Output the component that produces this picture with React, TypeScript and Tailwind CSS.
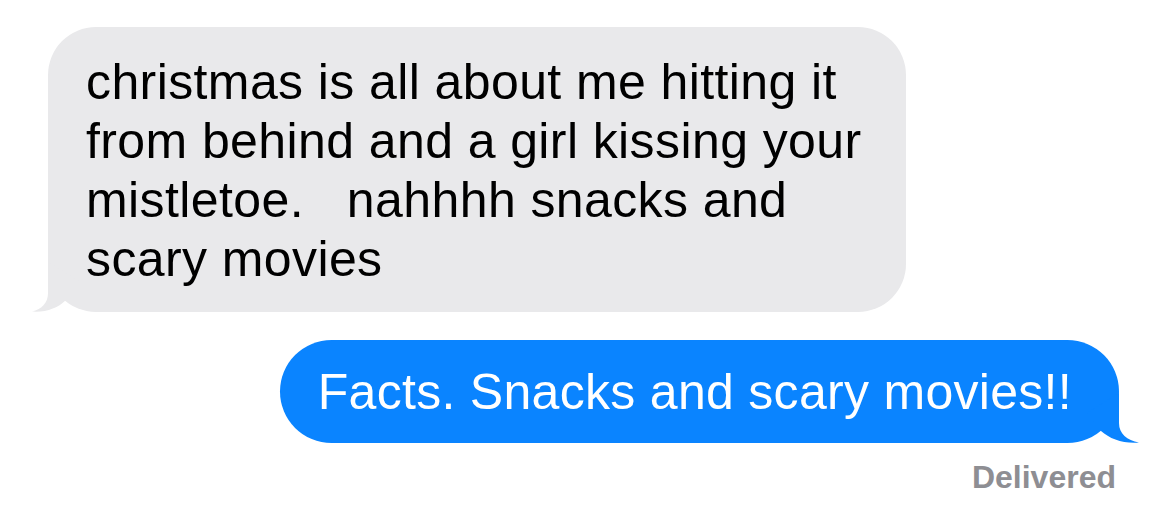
const font = { fontFamily: '"Liberation Sans", Arial, sans-serif' };

function LeftTail() {
  return (
    <svg
      className="absolute bottom-0 left-[-18px]"
      width="60"
      height="50"
      viewBox="0 0 60 50"
    >
      <path
        d="M18 0 L18 31 C18 41 12 47 2 49.6 C16 50.6 28 46 36 38 L50 20 Z"
        fill="#e9e9eb"
      />
    </svg>
  );
}

function RightTail() {
  return (
    <svg
      className="absolute bottom-0 right-[-22px]"
      width="64"
      height="50"
      viewBox="0 0 64 50"
    >
      <path
        d="M42 0 L42 30 C42 41 50 47 62 49.6 C46 50.8 33 46 24 38 L10 20 Z"
        fill="#0a84ff"
      />
    </svg>
  );
}

export default function App() {
  return (
    <div className="flex h-[528px] w-[1170px] flex-col bg-white" style={font}>
      <div className="relative ml-[48px] mt-[27px] w-[858px] rounded-[48px] bg-[#e9e9eb] pb-[23px] pl-[38px] pr-[24px] pt-[26px]">
        <LeftTail />
        <p className="relative text-[50px] leading-[59px] tracking-[0.4px] text-black">
          christmas is all about me hitting it from behind and a girl kissing
          your mistletoe.&nbsp;&nbsp; nahhhh snacks and scary movies
        </p>
      </div>

      <div className="relative mr-[51px] mt-[28px] self-end rounded-full bg-[#0a84ff] pb-[21px] pl-[38px] pr-[47px] pt-[23px]">
        <RightTail />
        <p className="relative whitespace-nowrap text-[50px] leading-[59px] tracking-[0.3px] text-white">
          Facts. Snacks and scary movies!!
        </p>
      </div>

      <div className="mr-[54px] mt-[16px] self-end text-[32px] font-bold leading-[36px] text-[#8e8e93]">
        Delivered
      </div>
    </div>
  );
}
